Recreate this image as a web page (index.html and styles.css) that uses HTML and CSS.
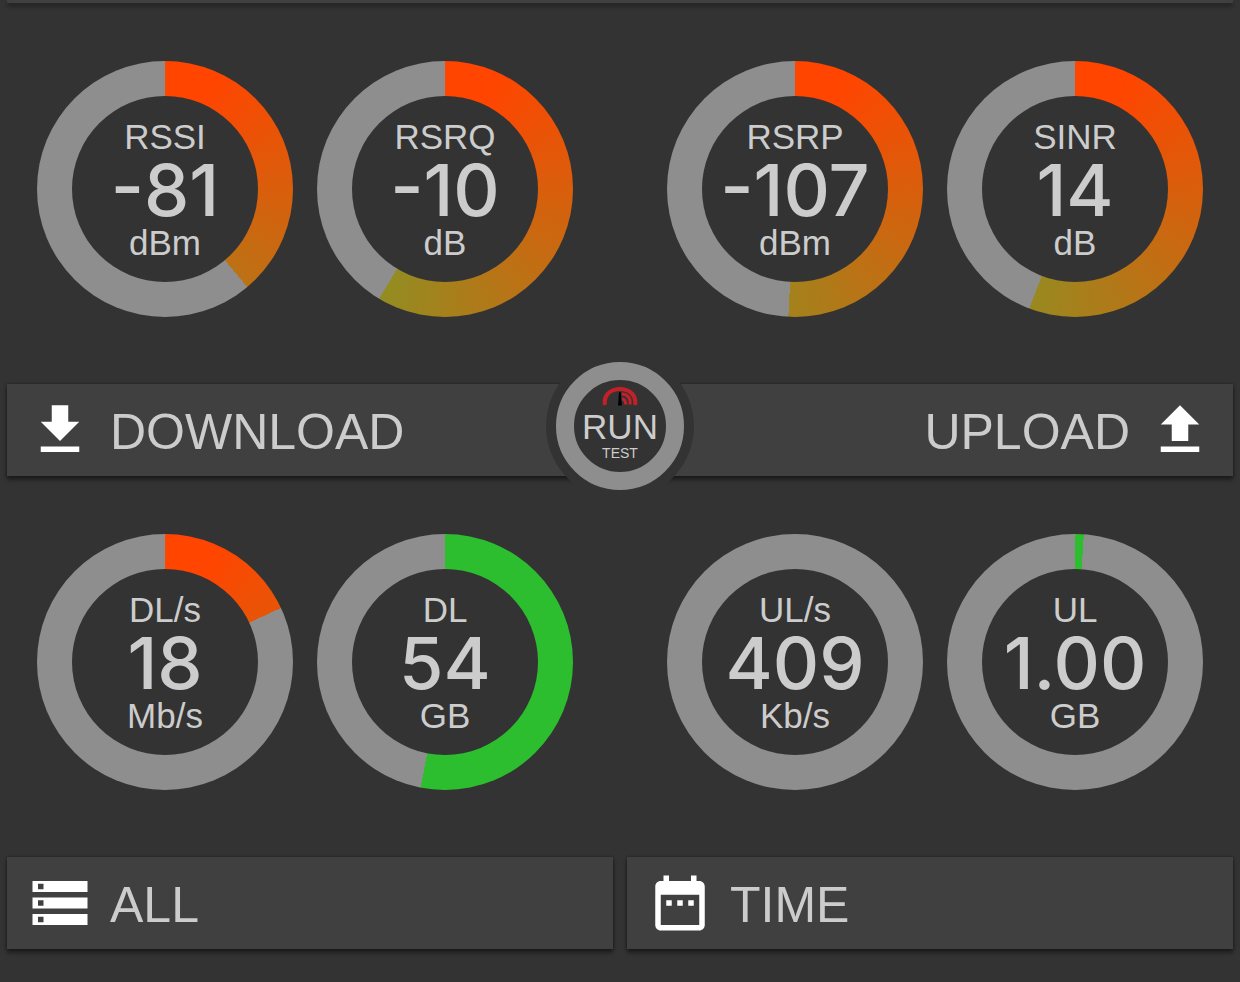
FILE: index.html
```html
<!DOCTYPE html>
<html lang="en">
<head>
<meta charset="UTF-8">
<meta name="viewport" content="width=device-width, initial-scale=1.0">
<title>Signal Monitor</title>
<link rel="stylesheet" href="styles.css">
</head>
<body>
<div class="top-edge"></div>

<section class="gauges">
    <div class="pair">
        <div class="gauge signal" style="--sweep: 140deg">
            <div class="dial">
                <span class="label">RSSI</span>
                <span class="value">-81</span>
                <span class="label">dBm</span>
            </div>
        </div>
        <div class="gauge signal" style="--sweep: 211deg">
            <div class="dial">
                <span class="label">RSRQ</span>
                <span class="value">-10</span>
                <span class="label">dB</span>
            </div>
        </div>
    </div>
    <div class="pair">
        <div class="gauge signal" style="--sweep: 183deg">
            <div class="dial">
                <span class="label">RSRP</span>
                <span class="value">-107</span>
                <span class="label">dBm</span>
            </div>
        </div>
        <div class="gauge signal" style="--sweep: 201deg">
            <div class="dial">
                <span class="label">SINR</span>
                <span class="value">14</span>
                <span class="label">dB</span>
            </div>
        </div>
    </div>
</section>

<div class="bar split">
    <h2>
        <svg class="icon" viewBox="0 0 24 24" aria-hidden="true"><path d="M19 9h-4V3H9v6H5l7 7 7-7zM5 18v2h14v-2H5z"/></svg>
        <span class="title">DOWNLOAD</span>
    </h2>
    <h2>
        <span class="title">UPLOAD</span>
        <svg class="icon" viewBox="0 0 24 24" aria-hidden="true"><path d="M9 16h6v-6h4l-7-7-7 7h4zM5 18h14v2H5z"/></svg>
    </h2>
    <button type="button" class="run">
        <svg class="meter" viewBox="0 0 36 20" aria-hidden="true">
            <path class="arc" d="M3 19C1 9 9 3 18 3s17 6 15 16"/>
            <path class="arc thin" d="M20 8C25 8 29 12 28 18.500M20 13C22 13 24 15 23.500 18.500"/>
            <path class="needle" d="M17 6h1.500l1.500 13.500h-4z"/>
        </svg>
        <span class="run-title">RUN</span>
        <span class="run-sub">TEST</span>
    </button>
</div>

<section class="gauges">
    <div class="pair">
        <div class="gauge signal" style="--sweep: 65deg">
            <div class="dial">
                <span class="label">DL/s</span>
                <span class="value">18</span>
                <span class="label">Mb/s</span>
            </div>
        </div>
        <div class="gauge data" style="--sweep: 191deg">
            <div class="dial">
                <span class="label">DL</span>
                <span class="value">54</span>
                <span class="label">GB</span>
            </div>
        </div>
    </div>
    <div class="pair">
        <div class="gauge signal" style="--sweep: 0deg">
            <div class="dial">
                <span class="label">UL/s</span>
                <span class="value">409</span>
                <span class="label">Kb/s</span>
            </div>
        </div>
        <div class="gauge data" style="--sweep: 4deg">
            <div class="dial">
                <span class="label">UL</span>
                <span class="value">1.00</span>
                <span class="label">GB</span>
            </div>
        </div>
    </div>
</section>

<div class="bar-row">
    <div class="bar">
        <h2>
            <svg class="icon" viewBox="0 0 24 24" aria-hidden="true"><path d="M2 20h20v-4H2v4zm2-3h2v2H4v-2zM2 4v4h20V4H2zm4 3H4V5h2v2zm-4 7h20v-4H2v4zm2-3h2v2H4v-2z"/></svg>
            <span class="title">ALL</span>
        </h2>
    </div>
    <div class="bar">
        <h2>
            <svg class="icon" viewBox="0 0 24 24" aria-hidden="true"><path d="M9 11H7v2h2v-2zm4 0h-2v2h2v-2zm4 0h-2v2h2v-2zm2-7h-1V2h-2v2H8V2H6v2H5c-1.110 0-1.990.900-1.990 2L3 20c0 1.100.890 2 2 2h14c1.100 0 2-.900 2-2V6c0-1.100-.900-2-2-2zm0 16H5V9h14v11z"/></svg>
            <span class="title">TIME</span>
        </h2>
    </div>
</div>
</body>
</html>
```
FILE: styles.css
```css
body {
    margin: 0;
    padding: 0 7px 33px;
    background-color: #333;
    color: #ccc;
    font-family: "Liberation Sans", Arial, sans-serif;
}
.top-edge {
    height: 3px;
    background-color: #404040;
    box-shadow: 0 3px 4px rgba(0, 0, 0, 0.45);
}
.gauges {
    display: flex;
    justify-content: space-between;
    padding: 58px 30px 67px;
}
.pair {
    display: flex;
    gap: 24px;
}
.gauge {
    width: 256px;
    height: 256px;
    padding: 35px;
    box-sizing: border-box;
    border-radius: 50%;
}
.signal {
    background: conic-gradient(transparent var(--sweep), #8e8e8e 0),
        conic-gradient(#ff4500 24deg, #32cd40 380deg);
}
.data {
    background: conic-gradient(#2dbe2f var(--sweep), #8e8e8e 0);
}
.dial {
    height: 100%;
    display: flex;
    flex-direction: column;
    align-items: center;
    justify-content: center;
    padding-top: 2px;
    box-sizing: border-box;
    border-radius: 50%;
    background-color: #333;
    white-space: nowrap;
}
.label {
    font-size: 35px;
    line-height: 36px;
}
.value {
    font-family: Inter, "Liberation Sans", sans-serif;
    font-size: 72px;
    font-weight: 500;
    line-height: 70px;
}
.bar {
    flex: 1;
    height: 92px;
    display: flex;
    align-items: center;
    padding: 0 20px;
    box-sizing: border-box;
    background-color: #404040;
    box-shadow: 0 0 3px rgba(0, 0, 0, 0.4), 0 4px 4px rgba(0, 0, 0, 0.4);
}
.split {
    position: relative;
    justify-content: space-between;
}
.bar-row {
    display: flex;
    gap: 14px;
}
h2 {
    display: flex;
    align-items: center;
    gap: 17px;
    margin: 0;
    font-size: 50px;
    font-weight: normal;
    line-height: 60px;
}
.title {
    padding-top: 3px;
}
.icon {
    width: 66px;
    height: 66px;
    fill: #fff;
}

/* round button over the middle of the bar */
.run {
    position: absolute;
    left: 50%;
    top: -22px;
    transform: translateX(-50%);
    width: 128px;
    height: 128px;
    display: flex;
    flex-direction: column;
    align-items: center;
    padding: 6px 0 0;
    border: 18px solid #8e8e8e;
    border-radius: 50%;
    background-color: #333;
    box-shadow: 0 0 0 10px #333;
    color: #ccc;
    font-family: inherit;
    cursor: pointer;
}
.meter {
    width: 36px;
    height: 20px;
    flex: none;
}
.arc {
    fill: none;
    stroke: #c4202a;
    stroke-width: 4;
}
.thin {
    stroke-width: 3;
}
.needle {
    fill: #000;
}
.run-title {
    font-size: 35px;
    line-height: 42px;
}
.run-sub {
    font-size: 14px;
    line-height: 10px;
}
```
